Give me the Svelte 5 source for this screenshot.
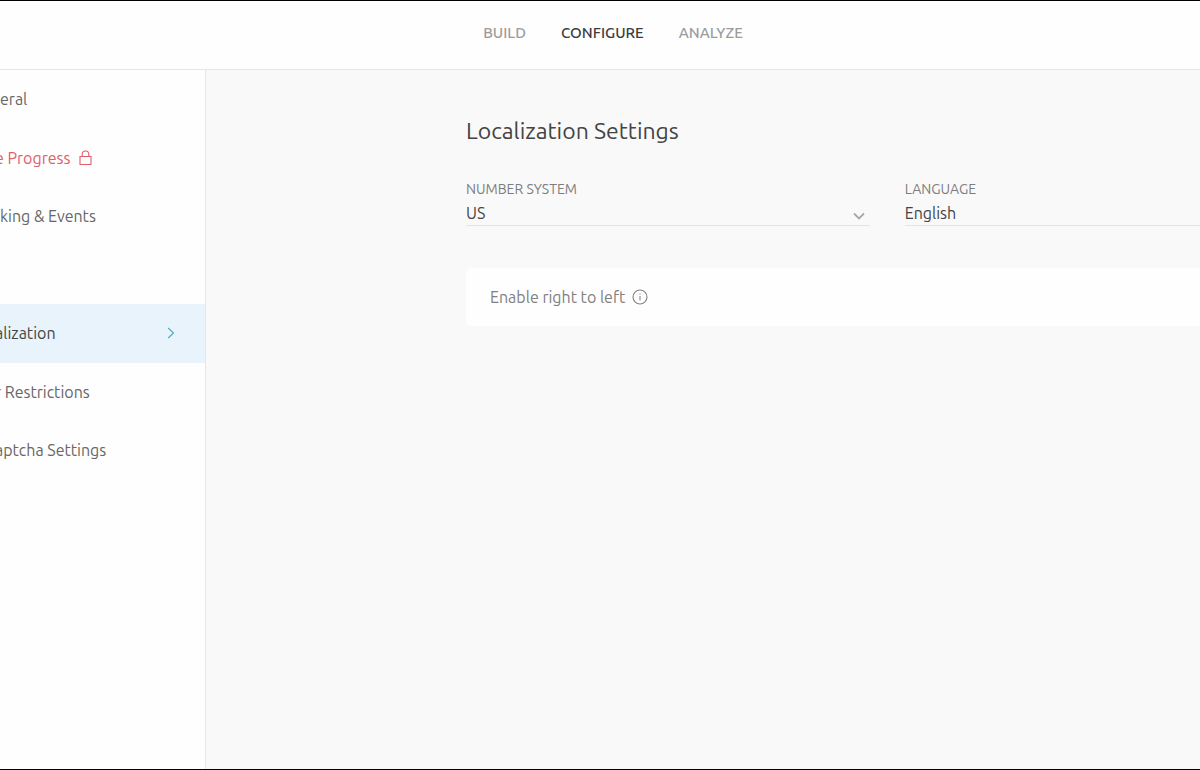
<script>
  let numberSystem = $state('US');
  let language = $state('English');
  const tabs = ['BUILD', 'CONFIGURE', 'ANALYZE'];
  const items = [
    { label: 'eral' },
    { label: 'e Progress', cut: true, locked: true },
    { label: 'king & Events' },
    { label: '' },
    { label: 'alization', cut: true, active: true },
    { label: 'r Restrictions', cut: true },
    { label: 'aptcha Settings', cut: true }
  ];
</script>

<div class="page">
  <header>
    <nav class="tabs">
      {#each tabs as tab}
        <a href="#{tab.toLowerCase()}" class:current={tab === 'CONFIGURE'}>{tab}</a>
      {/each}
    </nav>
  </header>
  <div class="body">
    <aside>
      <ul>
        {#each items as item}
          <li class:active={item.active} class:locked={item.locked} class:cut={item.cut}>
            {#if item.label}
              <a href="#settings">
                <span>{item.label}</span>
                {#if item.locked}
                  <svg class="lock" width="13" height="20" viewBox="0 -2 13 20" fill="none" stroke="currentColor" stroke-width="1.1" aria-hidden="true">
                    <path d="M1 6.5h11v8H1zM3.2 6.5V4.3C3.2 2.4 4.6 1 6.5 1s3.3 1.4 3.3 3.3v2.2" />
                  </svg>
                {/if}
                {#if item.active}
                  <svg class="arrow" width="8" height="20" viewBox="0 -4 8 20" fill="none" stroke="currentColor" stroke-width="1.2" aria-hidden="true">
                    <path d="M1.2 1l5.3 5-5.3 5" />
                  </svg>
                {/if}
              </a>
            {/if}
          </li>
        {/each}
      </ul>
    </aside>
    <main>
      <h1>Localization Settings</h1>
      <div class="fields">
        <div class="field">
          <label for="number-system">NUMBER SYSTEM</label>
          <div class="control">
            <select id="number-system" bind:value={numberSystem}><option>US</option></select>
            <svg width="12" height="8" viewBox="0 0 12 8" fill="none" stroke="currentColor" stroke-width="1.8" aria-hidden="true"><path d="M1 1.5l5 5 5-5" /></svg>
          </div>
        </div>
        <div class="field">
          <label for="language">LANGUAGE</label>
          <div class="control">
            <select id="language" bind:value={language}><option>English</option></select>
            <svg width="12" height="8" viewBox="0 0 12 8" fill="none" stroke="currentColor" stroke-width="1.8" aria-hidden="true"><path d="M1 1.5l5 5 5-5" /></svg>
          </div>
        </div>
      </div>
      <section class="card">
        <span>Enable right to left</span>
        <svg width="16" height="16" viewBox="0 0 16 16" fill="none" stroke="currentColor" aria-hidden="true">
          <circle cx="8" cy="8" r="7" stroke-width="1.1" />
          <path d="M8 7v4.5M8 4.3v1.2" />
        </svg>
      </section>
    </main>
  </div>
</div>

<style>
  :global(body) { background: #f9f9f9; }
  .page {
    box-sizing: border-box;
    min-height: 100vh;
    display: flex;
    flex-direction: column;
    overflow: hidden;
    border-top: 1px solid #000;
    border-bottom: 1px solid #000;
    background: #f9f9f9;
    color: #444;
    font-family: Ubuntu, "Noto Sans", sans-serif;
    font-size: 16px;
    line-height: 20px;
  }
  a { color: inherit; text-decoration: none; }
  header {
    display: flex;
    justify-content: center;
    padding: 22px 0 26px 26px;
    background: #fefefe;
    border-bottom: 1px solid #e6e6e6;
  }
  .tabs { display: flex; gap: 35px; font-size: 15px; font-weight: 500; color: #9c9c9c; }
  .tabs .current { color: #3c3c3c; }
  .body { flex: 1; display: flex; }
  aside {
    flex: 0 0 205px;
    overflow: hidden;
    background: #fefefe;
    border-right: 1px solid #e6e6e6;
    color: #666;
  }
  ul { margin: 0; padding: 0; list-style: none; }
  li { height: 59px; }
  li:nth-child(even) { height: 58px; }
  li a { display: flex; padding: 19px 30px 19px 0; white-space: nowrap; }
  .cut span { margin-left: -5px; }
  .locked { color: #df5f6b; }
  .lock { margin-left: 9px; }
  .active { background: #e9f3fb; color: #444; }
  .arrow { margin-left: auto; color: #4fadc9; }
  main { flex: 1; min-width: 0; padding: 46px 0 0 260px; }
  h1 { margin: 0; font-size: 23px; font-weight: 400; line-height: 30px; }
  .fields { display: grid; grid-template-columns: repeat(2, 55%); gap: 35px; margin-top: 34px; }
  .field { display: flex; flex-direction: column; }
  label { font-size: 14px; line-height: 18px; color: #7d7d7d; }
  .control { display: flex; align-items: flex-end; margin-top: 5px; border-bottom: 1px solid #e4e4e4; color: #a8a8a8; }
  select {
    flex: 1;
    height: 22px;
    margin: 0;
    padding: 0 0 2px;
    border: 0;
    appearance: none;
    background: transparent;
    color: #444;
    font: inherit;
  }
  .control svg { margin: 0 5px 5px 0; }
  .card {
    display: flex;
    align-items: center;
    gap: 7px;
    width: calc(110% + 35px);
    box-sizing: border-box;
    margin-top: 42px;
    padding: 19px 24px;
    border-radius: 5px;
    background: #fefefe;
    color: #808080;
  }
</style>
